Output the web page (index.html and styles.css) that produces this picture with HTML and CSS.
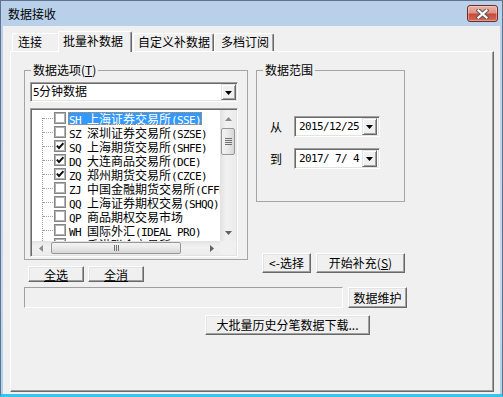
FILE: index.html
```html
<!DOCTYPE html>
<html>
<head>
	<meta charset="utf-8">
	<title>数据接收</title>
	<link rel="stylesheet" href="styles.css">
</head>
<body>
	<div class="window">
		<div class="titleBar">
			<span class="title">数据接收</span>
			<button class="btnClose">
				<svg width="13" height="10" viewBox="0 0 13 10">
					<path d="M2.5 1.5 L10.5 8.5 M10.5 1.5 L2.5 8.5" stroke="#5b5b5b" stroke-width="4.2" stroke-linecap="square"/>
					<path d="M2.5 1.5 L10.5 8.5 M10.5 1.5 L2.5 8.5" stroke="#fff" stroke-width="2.2" stroke-linecap="square"/>
				</svg>
			</button>
		</div>
		<div class="client">
			<div class="tabs">
				<div class="tab tabConnect">连接</div>
				<div class="tab tabBatch">批量补数据</div>
				<div class="tab tabCustom">自定义补数据</div>
				<div class="tab tabDepth">多档订阅</div>
			</div>
			<div class="panel">
				<div class="mainRow">
					<div class="colLeft">
						<fieldset class="group groupOptions">
							<legend>数据选项(<u>T</u>)</legend>
							<div class="combo">
								<span class="comboText"><span class="en">5</span>分钟数据</span>
								<span class="dropBtn">
									<svg width="7" height="4" viewBox="0 0 7 4"><polygon points="0,0 7,0 3.5,4" fill="#000"/></svg>
								</span>
							</div>
							<div class="treeBox">
								<div class="treeBody">
									<ul class="tree">
										<li><span class="cb"></span><span class="label selected"><span class="en">SH </span>上海证券交易所<span class="en">(SSE)</span></span></li>
										<li><span class="cb"></span><span class="label"><span class="en">SZ </span>深圳证券交易所<span class="en">(SZSE)</span></span></li>
										<li><span class="cb"><svg width="8" height="8" viewBox="0 0 8 8"><polyline points="0.8,3.6 3,6 7.4,1.2" fill="none" stroke="#111" stroke-width="1.9"/></svg></span><span class="label"><span class="en">SQ </span>上海期货交易所<span class="en">(SHFE)</span></span></li>
										<li><span class="cb"><svg width="8" height="8" viewBox="0 0 8 8"><polyline points="0.8,3.6 3,6 7.4,1.2" fill="none" stroke="#111" stroke-width="1.9"/></svg></span><span class="label"><span class="en">DQ </span>大连商品交易所<span class="en">(DCE)</span></span></li>
										<li><span class="cb"><svg width="8" height="8" viewBox="0 0 8 8"><polyline points="0.8,3.6 3,6 7.4,1.2" fill="none" stroke="#111" stroke-width="1.9"/></svg></span><span class="label"><span class="en">ZQ </span>郑州期货交易所<span class="en">(CZCE)</span></span></li>
										<li><span class="cb"></span><span class="label"><span class="en">ZJ </span>中国金融期货交易所<span class="en">(CFFEX)</span></span></li>
										<li><span class="cb"></span><span class="label"><span class="en">QQ </span>上海证券期权交易<span class="en">(SHQQ)</span></span></li>
										<li><span class="cb"></span><span class="label"><span class="en">QP </span>商品期权交易市场</span></li>
										<li><span class="cb"></span><span class="label"><span class="en">WH </span>国际外汇<span class="en">(IDEAL PRO)</span></span></li>
										<li><span class="cb"></span><span class="label"><span class="en">HK </span>香港联合交易所<span class="en">(HKEX)</span></span></li>
									</ul>
									<div class="vScroll">
										<div class="sbArrow">
											<svg width="7" height="4" viewBox="0 0 7 4"><polygon points="0,4 7,4 3.5,0" fill="#8c8c8c"/></svg>
										</div>
										<div class="vThumb"><span class="gripH"></span></div>
										<div class="sbFill"></div>
										<div class="sbArrow">
											<svg width="7" height="4" viewBox="0 0 7 4"><polygon points="0,0 7,0 3.5,4" fill="#606060"/></svg>
										</div>
									</div>
								</div>
								<div class="hRow">
									<div class="hScroll">
										<div class="sbArrowH">
											<svg width="4" height="7" viewBox="0 0 4 7"><polygon points="4,0 4,7 0,3.5" fill="#8c8c8c"/></svg>
										</div>
										<div class="hThumb"><span class="gripV"></span></div>
										<div class="sbFill"></div>
										<div class="sbArrowH">
											<svg width="4" height="7" viewBox="0 0 4 7"><polygon points="0,0 0,7 4,3.5" fill="#606060"/></svg>
										</div>
									</div>
									<div class="corner"></div>
								</div>
							</div>
						</fieldset>
						<div class="selButtons">
							<button class="btn btnSmall"><u>全选</u></button>
							<button class="btn btnSmall"><u>全消</u></button>
						</div>
					</div>
					<div class="colRight">
						<fieldset class="group groupRange">
							<legend>数据范围</legend>
							<div class="dateRow">
								<span class="dateLabel">从</span>
								<div class="datePicker">
									<span class="dateText en">2015/12/25</span>
									<span class="dropBtn">
										<svg width="7" height="4" viewBox="0 0 7 4"><polygon points="0,0 7,0 3.5,4" fill="#000"/></svg>
									</span>
								</div>
							</div>
							<div class="dateRow">
								<span class="dateLabel">到</span>
								<div class="datePicker">
									<span class="dateText en">2017/ 7/ 4</span>
									<span class="dropBtn">
										<svg width="7" height="4" viewBox="0 0 7 4"><polygon points="0,0 7,0 3.5,4" fill="#000"/></svg>
									</span>
								</div>
							</div>
						</fieldset>
						<div class="actionButtons">
							<button class="btn btnChoose">&lt;-选择</button>
							<button class="btn btnStart">开始补充(<u>S</u>)</button>
						</div>
					</div>
				</div>
				<div class="statusRow">
					<div class="statusField"></div>
					<button class="btn btnMaintain">数据维护</button>
				</div>
				<div class="downloadRow">
					<button class="btn btnDownload">大批量历史分笔数据下载...</button>
				</div>
			</div>
		</div>
	</div>
</body>
</html>
```

FILE: styles.css
```css
html, body {
	margin: 0;
	background: #f0f0f0;
}
body {
	font-family: "Noto Sans CJK SC", sans-serif;
	font-size: 12px;
	color: #000;
}
.en {
	font-family: "DejaVu Sans Mono", monospace;
	font-size: 11px;
	letter-spacing: -0.62px;
	white-space: pre;
}

/* window frame */
.window {
	width: 503px;
	height: 397px;
	box-sizing: border-box;
	border: 1px solid #62728a;
	border-bottom: 3px solid #36c5ec;
	padding: 0 2px;
	background: linear-gradient(#b9d0ea, #c4d8ee 70%, #a8d4ef);
	display: flex;
	flex-direction: column;
}
.titleBar {
	height: 25px;
	display: flex;
	align-items: flex-start;
}
.title {
	margin: 6px 0 0 5px;
	line-height: 14px;
}
.btnClose {
	margin: 4px 2px 0 auto;
	width: 31px;
	height: 17px;
	padding: 0;
	border: 1px solid #6e2b22;
	border-radius: 3px;
	background: linear-gradient(#eab0a4, #de9283 48%, #c7473a 52%, #d46a5a);
	box-shadow: inset 0 0 0 1px rgba(255, 255, 255, 0.35);
	display: flex;
	align-items: center;
	justify-content: center;
}

.client {
	flex: 1;
	background: #f0f0f0;
	padding: 5px 6px 0 7px;
}

/* tabs */
.tabs {
	display: flex;
	align-items: flex-end;
	height: 20px;
	padding-left: 2px;
	position: relative;
	z-index: 1;
}
.tab {
	box-sizing: border-box;
	height: 18px;
	line-height: 16px;
	padding-left: 5px;
	border: 1px solid #696969;
	border-color: #fff #696969 transparent #fff;
	border-bottom: 0;
	border-radius: 2px 2px 0 0;
	box-shadow: inset -1px 0 0 #a0a0a0;
	white-space: nowrap;
}
.tabConnect {
	width: 48px;
}
.tabBatch {
	width: 74px;
	height: 21px;
	line-height: 17px;
	margin: 0 0 -1px -2px;
	padding-left: 4px;
	background: #f0f0f0;
}
.tabCustom {
	width: 81px;
	margin-left: 1px;
	padding-left: 4px;
}
.tabDepth {
	width: 60px;
	padding-left: 6px;
}

.panel {
	box-sizing: border-box;
	height: 341px;
	border: 1px solid;
	border-color: #fff #696969 #696969 #fff;
	box-shadow: inset -1px -1px 0 #a0a0a0;
	padding-top: 11px;
}
.mainRow {
	display: flex;
	padding-left: 13px;
}
.colLeft {
	width: 224px;
}
.colRight {
	width: 149px;
	margin-left: 8px;
}

/* group boxes */
.group {
	margin: 0;
	min-width: 0;
	border: 1px solid #a5a5a5;
	box-sizing: border-box;
	padding-left: 0;
	padding-right: 0;
}
.group legend {
	margin-left: 6px;
	padding: 0 2px;
	line-height: 14px;
}
.groupOptions {
	padding-top: 5px;
	padding-bottom: 2px;
}
.groupRange {
	padding-top: 39px;
	padding-bottom: 32px;
}

/* sunken controls */
.combo,
.treeBox,
.datePicker {
	box-sizing: border-box;
	border: 1px solid;
	border-color: #a0a0a0 #fff #fff #a0a0a0;
	box-shadow: inset 1px 1px 0 #696969, inset -1px -1px 0 #e3e3e3;
	background: #fff;
	padding: 1px;
}
.combo {
	height: 20px;
	margin: 0 9px 0 5px;
	display: flex;
	align-items: center;
}
.comboText {
	flex: 1;
	padding-left: 1px;
	line-height: 16px;
}
.dropBtn {
	box-sizing: border-box;
	width: 15px;
	height: 16px;
	background: #f0f0f0;
	border: 1px solid;
	border-color: #e3e3e3 #696969 #696969 #e3e3e3;
	box-shadow: inset 1px 1px 0 #fff, inset -1px -1px 0 #a0a0a0;
	display: flex;
	align-items: center;
	justify-content: center;
	flex: none;
}
.dropBtn svg {
	margin-top: 1px;
}

/* tree list */
.treeBox {
	margin: 6px 9px 0 5px;
	height: 149px;
	display: flex;
	flex-direction: column;
}
.treeBody {
	flex: 1;
	display: flex;
	min-height: 0;
}
.tree {
	flex: 1;
	min-width: 0;
	margin: 0;
	padding: 1px 0 0 0;
	list-style: none;
	overflow: hidden;
	background-image: repeating-linear-gradient(to bottom, #a0a0a0 0 1px, transparent 1px 2px);
	background-size: 1px 100%;
	background-repeat: no-repeat;
	background-position: 10px 8px;
}
.tree li {
	height: 14px;
	display: flex;
	align-items: center;
	white-space: nowrap;
}
.tree li::before {
	content: "";
	flex: none;
	width: 10px;
	margin-left: 11px;
	border-top: 1px dotted #a0a0a0;
}
.cb {
	box-sizing: border-box;
	width: 12px;
	height: 12px;
	margin-left: 1px;
	border: 1px solid #858585;
	box-shadow: inset 0 0 0 1px #b3b3b3;
	background: #fff;
	padding: 1px;
	flex: none;
}
.cb svg {
	display: block;
}
.label {
	flex: none;
	margin-left: 2px;
	padding: 0 1px;
	line-height: 13px;
	height: 13px;
	box-sizing: border-box;
}
.label.selected {
	background: #3399ff;
	color: #fff;
	outline: 1px dotted #d9873c;
	outline-offset: -1px;
}

/* scroll bars */
.vScroll {
	width: 16px;
	flex: none;
	display: flex;
	flex-direction: column;
	background: linear-gradient(to right, #e2e2e2, #f1f1f1 40%, #ececec);
}
.sbArrow {
	height: 17px;
	display: flex;
	align-items: center;
	justify-content: center;
}
.sbFill {
	flex: 1;
}
.vThumb {
	height: 27px;
	margin: 1px 1px 0 1px;
	box-sizing: border-box;
	border: 1px solid #979797;
	border-radius: 2px;
	background: linear-gradient(to right, #f3f3f3, #e9e9e9 50%, #d6d6d6);
	display: flex;
	align-items: center;
	justify-content: center;
}
.gripH {
	width: 7px;
	height: 7px;
	background: repeating-linear-gradient(to bottom, #6f6f6f 0 1px, transparent 1px 2px);
}
.hRow {
	height: 14px;
	display: flex;
}
.hScroll {
	flex: 1;
	display: flex;
	background: linear-gradient(#e2e2e2, #f1f1f1 40%, #ececec);
}
.sbArrowH {
	width: 17px;
	display: flex;
	align-items: center;
	justify-content: center;
}
.hThumb {
	width: 130px;
	margin: 1px 0 1px 2px;
	box-sizing: border-box;
	border: 1px solid #979797;
	border-radius: 2px;
	background: linear-gradient(#f3f3f3, #e9e9e9 50%, #d6d6d6);
	display: flex;
	align-items: center;
	justify-content: center;
}
.gripV {
	width: 5px;
	height: 6px;
	background: repeating-linear-gradient(to right, #6f6f6f 0 1px, transparent 1px 2px);
}
.corner {
	width: 16px;
	background: #f0f0f0;
}

/* date range */
.dateRow {
	display: flex;
	align-items: center;
	padding-left: 13px;
}
.dateRow + .dateRow {
	margin-top: 11px;
}
.dateLabel {
	width: 12px;
	margin-right: 12px;
	line-height: 14px;
}
.datePicker {
	width: 86px;
	height: 21px;
	display: flex;
	align-items: center;
}
.dateText {
	flex: 1;
	padding-left: 3px;
	line-height: 15px;
}
.datePicker .dropBtn {
	height: 17px;
	margin-right: 1px;
}

/* buttons */
.btn {
	font: inherit;
	color: #000;
	box-sizing: border-box;
	height: 20px;
	padding: 0;
	background: #f0f0f0;
	border: 1px solid;
	border-color: #fff #696969 #696969 #fff;
	box-shadow: inset -1px -1px 0 #a0a0a0, inset 1px 1px 0 #e3e3e3;
	line-height: 16px;
	white-space: nowrap;
}
.selButtons {
	display: flex;
	gap: 4px;
	margin-top: 6px;
	padding-left: 4px;
}
.btnSmall {
	width: 56px;
	height: 16px;
	line-height: 13px;
}
.actionButtons {
	display: flex;
	gap: 5px;
	margin-top: 51px;
	padding-left: 6px;
}
.btnChoose {
	width: 51px;
}
.btnStart {
	width: 89px;
	flex: none;
}
.statusRow {
	display: flex;
	gap: 5px;
	margin-top: 5px;
	padding-left: 13px;
}
.statusField {
	width: 319px;
	height: 21px;
	box-sizing: border-box;
	border: 1px solid;
	border-color: #a0a0a0 #fff #fff #a0a0a0;
}
.btnMaintain {
	width: 59px;
	height: 21px;
}
.downloadRow {
	margin-top: 7px;
	padding-left: 194px;
}
.btnDownload {
	width: 165px;
}
```
